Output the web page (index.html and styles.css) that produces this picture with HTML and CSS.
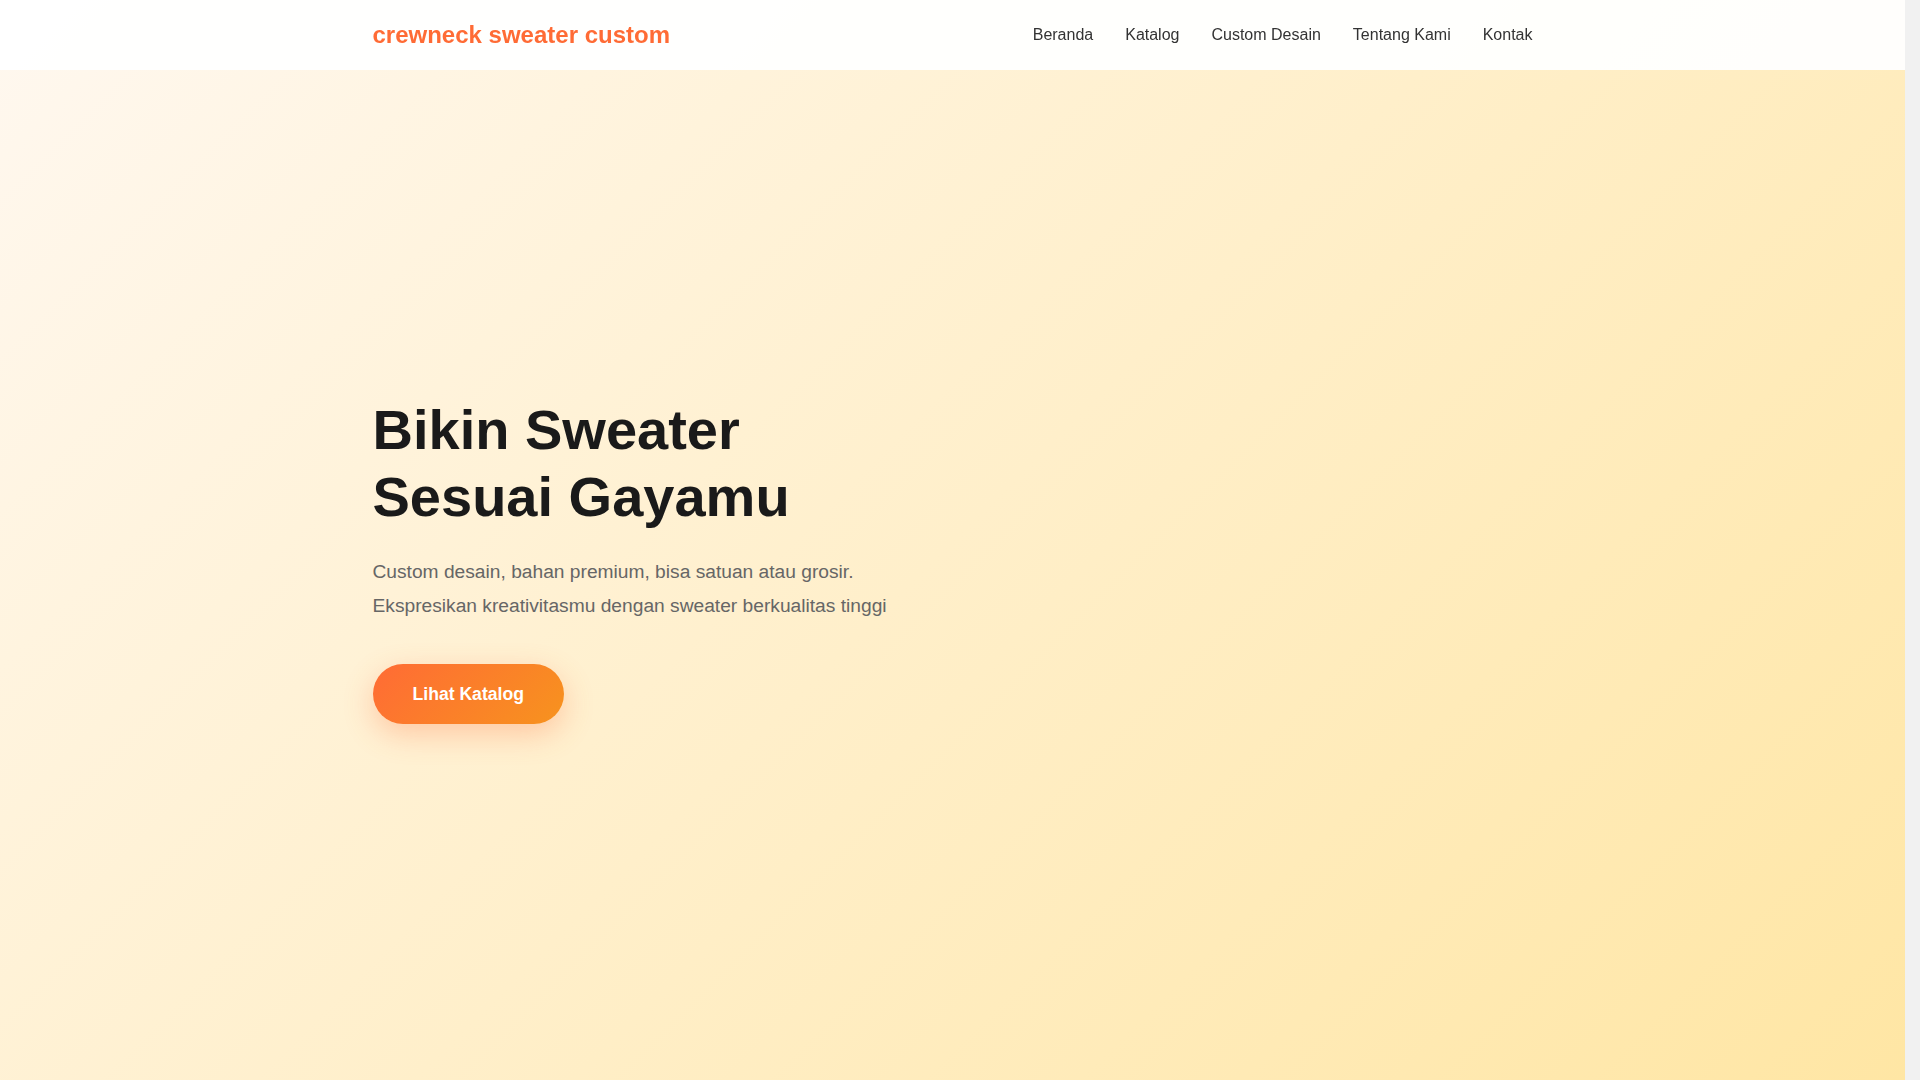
FILE: index.html
```html
<!DOCTYPE html>
<html lang="id">
<head>
  <meta charset="UTF-8">
  <meta name="viewport" content="width=device-width, initial-scale=1.0">
  <title>crewneck sweater custom</title>
  <link rel="stylesheet" href="styles.css">
</head>
<body>
  <header class="header">
    <div class="container header-inner">
      <a href="#beranda" class="logo">crewneck sweater custom</a>
      <nav class="nav">
        <a href="#beranda">Beranda</a>
        <a href="#katalog">Katalog</a>
        <a href="#custom">Custom Desain</a>
        <a href="#tentang">Tentang Kami</a>
        <a href="#kontak">Kontak</a>
      </nav>
    </div>
  </header>

  <section class="hero" id="beranda">
    <div class="container hero-grid">
      <div class="hero-text">
        <h1>Bikin Sweater Sesuai Gayamu</h1>
        <p>Custom desain, bahan premium, bisa satuan atau grosir. Ekspresikan kreativitasmu dengan sweater berkualitas tinggi</p>
        <a href="#katalog" class="btn">Lihat Katalog</a>
      </div>
      <div class="hero-image"></div>
    </div>
  </section>

  <section class="section" id="katalog">
    <div class="container">
      <h2>Katalog</h2>
      <p>Pilihan crewneck sweater dengan berbagai warna dan ukuran.</p>
    </div>
  </section>

  <section class="section alt" id="custom">
    <div class="container">
      <h2>Custom Desain</h2>
      <p>Kirim desainmu, kami cetak atau bordir di sweater pilihanmu.</p>
    </div>
  </section>

  <section class="section" id="tentang">
    <div class="container">
      <h2>Tentang Kami</h2>
      <p>Produsen sweater lokal dengan bahan fleece premium.</p>
    </div>
  </section>

  <section class="section alt" id="testimoni">
    <div class="container">
      <h2>Testimoni</h2>
      <p>Apa kata pelanggan kami.</p>
    </div>
  </section>

  <section class="section" id="faq">
    <div class="container">
      <h2>FAQ</h2>
      <p>Pertanyaan yang sering diajukan.</p>
    </div>
  </section>

  <section class="section alt" id="kontak">
    <div class="container">
      <h2>Kontak</h2>
      <p>Hubungi kami lewat WhatsApp atau email.</p>
    </div>
  </section>

  <footer class="footer">
    <div class="container">&copy; crewneck sweater custom</div>
  </footer>
</body>
</html>
```

FILE: styles.css
```css
* {
  margin: 0;
  padding: 0;
  box-sizing: border-box;
}

/* ruang untuk scrollbar (15px) */
html {
  background-color: #f1f1f1;
}

body {
  margin-right: 15px;
  font-family: "Liberation Sans", Arial, sans-serif;
  color: #1a1a1a;
  background-color: #fff;
}

.container {
  max-width: 1200px;
  margin: 0 auto;
  padding: 0 20px;
}

/* header */
.header {
  position: fixed;
  top: 0;
  left: 0;
  right: 15px;
  height: 70px;
  background: rgba(255, 255, 255, 0.95);
  z-index: 10;
}

.header-inner {
  height: 100%;
  display: flex;
  justify-content: space-between;
  align-items: center;
}

.logo {
  font-size: 24px;
  font-weight: bold;
  color: #ff6b35;
  text-decoration: none;
}

.nav {
  display: flex;
  gap: 32px;
}

.nav a {
  font-size: 16px;
  color: #333;
  text-decoration: none;
}

.nav a:hover {
  color: #ff6b35;
}

/* hero */
.hero {
  min-height: 100vh;
  padding: 70px 0 30px;
  display: flex;
  align-items: center;
  background: linear-gradient(135deg, #fff8f0 0%, #ffe6a4 100%);
}

.hero-grid {
  width: 100%;
  display: grid;
  grid-template-columns: 1fr 1fr;
  gap: 64px;
  align-items: center;
}

.hero-text h1 {
  font-size: 56px;
  line-height: 1.2;
  font-weight: bold;
  color: #1a1a1a;
  margin-bottom: 24px;
}

.hero-text p {
  font-size: 19.2px;
  line-height: 1.8;
  color: #666;
  margin-bottom: 40px;
}

.btn {
  display: inline-block;
  padding: 20px 40px;
  font-size: 17.6px;
  line-height: 20px;
  font-weight: bold;
  color: #fff;
  text-decoration: none;
  border-radius: 30px;
  background: linear-gradient(135deg, #ff6b35 0%, #f7931e 100%);
  box-shadow: 0 10px 30px rgba(255, 107, 53, 0.3);
}

/* bagian di bawah hero */
.section {
  min-height: 1100px;
  padding: 100px 0;
}

.section.alt {
  background-color: #fffaf3;
}

.section h2 {
  font-size: 40px;
  margin-bottom: 16px;
  text-align: center;
}

.section p {
  font-size: 18px;
  color: #666;
  text-align: center;
}

.footer {
  padding: 40px 0;
  background-color: #1a1a1a;
  color: #ccc;
  text-align: center;
  font-size: 14px;
}
```
